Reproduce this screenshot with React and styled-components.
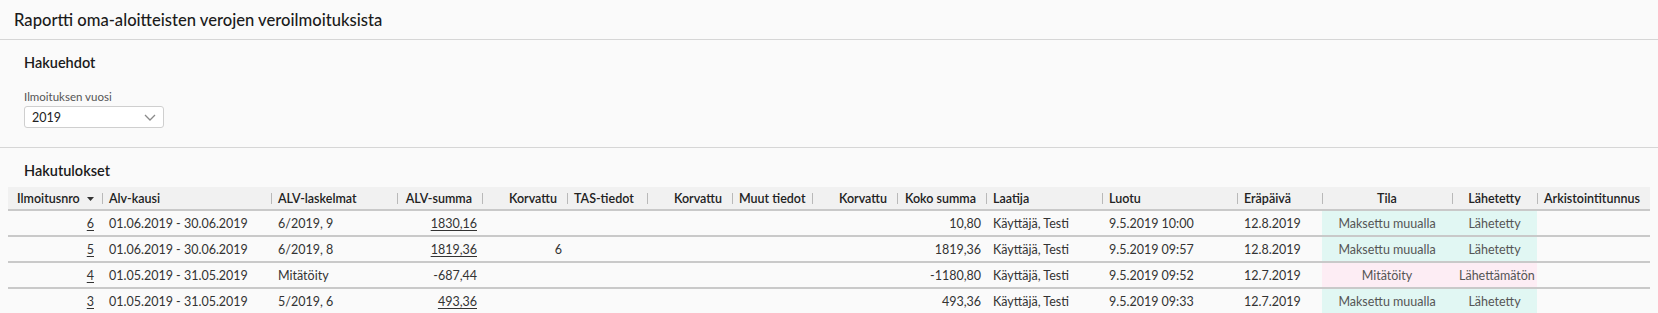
import React from 'react'
import styled, { createGlobalStyle } from 'styled-components'

const GlobalStyle = createGlobalStyle`
  html, body {
    margin: 0;
    padding: 0;
    background: #fafafa;
  }
  body {
    font-family: Lato, "Noto Sans", sans-serif;
    color: #333;
  }
`

const Page = styled.div`
  width: 1658px;
  display: flex;
  flex-direction: column;
`

const TitleBar = styled.header`
  height: 39px;
  display: flex;
  align-items: center;
  padding-left: 14px;
  border-bottom: 1px solid #d6d6d6;
`

const Title = styled.h1`
  margin: 0;
  font-size: 16.6px;
  font-weight: 500;
  color: #1b1b1b;
`

const Section = styled.section`
  display: flex;
  flex-direction: column;
  padding: ${p => p.$pad || '13px 24px 19px'};
  border-bottom: ${p => (p.$divider ? '1px solid #d6d6d6' : 'none')};
`

const SectionTitle = styled.h2`
  margin: 0;
  height: 20px;
  line-height: 20px;
  font-size: 14.5px;
  font-weight: 600;
  color: #1b1b1b;
  padding-left: ${p => p.$indent || '0'};
`

const Field = styled.div`
  display: flex;
  flex-direction: column;
  gap: 2px;
  margin-top: 17px;
`

const Label = styled.label`
  font-size: 11.5px;
  line-height: 14px;
  color: #555;
`

const SelectBox = styled.div`
  box-sizing: content-box;
  width: 124px;
  height: 20px;
  padding: 0 7px 0 7px;
  border: 1px solid #cfcfcf;
  border-radius: 3px;
  background: #fff;
  display: flex;
  align-items: center;
  justify-content: space-between;
  font-size: 12.5px;
  color: #222;
`

const Table = styled.table`
  margin-top: 6px;
  width: 1642px;
  table-layout: fixed;
  border-collapse: collapse;
  font-size: 12.5px;
`

const HeadCell = styled.th`
  position: relative;
  height: 22px;
  padding: 0 ${p => (p.$align === 'right' ? '10px' : '7px')} 0 ${p => p.$padLeft || '7px'};
  background: #f1f1f1;
  border-bottom: 2px solid #c9c9c9;
  text-align: ${p => p.$align || 'left'};
  font-weight: 600;
  color: #222;
  white-space: nowrap;

  &::before {
    content: '';
    display: ${p => (p.$first ? 'none' : 'block')};
    position: absolute;
    left: 0;
    top: 6px;
    bottom: 5px;
    border-left: 1px solid #b9b9b9;
  }
`

const SortIcon = styled.svg`
  margin-left: 7px;
  vertical-align: middle;
`

const Row = styled.tr`
  border-bottom: 2px solid #c9c9c9;
`

const Cell = styled.td`
  height: 24px;
  padding: 0 ${p => (p.$align === 'right' ? p.$padRight || '5px' : '7px')} 0 7px;
  text-align: ${p => p.$align || 'left'};
  white-space: nowrap;
  overflow: hidden;
  color: ${p => (p.$tone ? '#555' : '#333')};
  background: ${p =>
    p.$tone === 'ok' ? '#e1f7f3' : p.$tone === 'bad' ? '#fdedf4' : 'transparent'};
`

const Link = styled.a`
  color: inherit;
  text-decoration: underline;
  text-underline-offset: 2px;
`

const columns = [
  { title: 'Ilmoitusnro', width: 94, align: 'right', headAlign: 'left', sort: true },
  { title: 'Alv-kausi', width: 169 },
  { title: 'ALV-laskelmat', width: 126 },
  { title: 'ALV-summa', width: 85, align: 'right' },
  { title: 'Korvattu', width: 85, align: 'right' },
  { title: 'TAS-tiedot', width: 80 },
  { title: 'Korvattu', width: 85, align: 'right' },
  { title: 'Muut tiedot', width: 80 },
  { title: 'Korvattu', width: 85, align: 'right' },
  { title: 'Koko summa', width: 89, align: 'right' },
  { title: 'Laatija', width: 116 },
  { title: 'Luotu', width: 135 },
  { title: 'Eräpäivä', width: 85 },
  { title: 'Tila', width: 130, align: 'center' },
  { title: 'Lähetetty', width: 85, align: 'center' },
  { title: 'Arkistointitunnus', width: 113 },
]

const rows = [
  {
    nro: '6', kausi: '01.06.2019 - 30.06.2019', laskelmat: '6/2019, 9', summa: '1830,16',
    summaLink: true, korvattu: '', koko: '10,80', luotu: '9.5.2019 10:00', era: '12.8.2019',
    tila: 'Maksettu muualla', lahetetty: 'Lähetetty', tone: 'ok',
  },
  {
    nro: '5', kausi: '01.06.2019 - 30.06.2019', laskelmat: '6/2019, 8', summa: '1819,36',
    summaLink: true, korvattu: '6', koko: '1819,36', luotu: '9.5.2019 09:57', era: '12.8.2019',
    tila: 'Maksettu muualla', lahetetty: 'Lähetetty', tone: 'ok',
  },
  {
    nro: '4', kausi: '01.05.2019 - 31.05.2019', laskelmat: 'Mitätöity', summa: '-687,44',
    summaLink: false, korvattu: '', koko: '-1180,80', luotu: '9.5.2019 09:52', era: '12.7.2019',
    tila: 'Mitätöity', lahetetty: 'Lähettämätön', tone: 'bad',
  },
  {
    nro: '3', kausi: '01.05.2019 - 31.05.2019', laskelmat: '5/2019, 6', summa: '493,36',
    summaLink: true, korvattu: '', koko: '493,36', luotu: '9.5.2019 09:33', era: '12.7.2019',
    tila: 'Maksettu muualla', lahetetty: 'Lähetetty', tone: 'ok',
  },
]

const Chevron = () => (
  <svg width="12" height="7" viewBox="0 0 12 7">
    <path d="M1 1 L6 6 L11 1" fill="none" stroke="#8a8a8a" strokeWidth="1.3" />
  </svg>
)

const App = () => {
  return (
    <Page>
      <GlobalStyle />
      <TitleBar>
        <Title>Raportti oma-aloitteisten verojen veroilmoituksista</Title>
      </TitleBar>

      <Section $divider>
        <SectionTitle>Hakuehdot</SectionTitle>
        <Field>
          <Label>Ilmoituksen vuosi</Label>
          <SelectBox>
            <span>2019</span>
            <Chevron />
          </SelectBox>
        </Field>
      </Section>

      <Section $pad="13px 8px 0">
        <SectionTitle $indent="16px">Hakutulokset</SectionTitle>
        <Table>
          <colgroup>
            {columns.map((c, i) => (
              <col key={i} style={{ width: c.width }} />
            ))}
          </colgroup>
          <thead>
            <tr>
              {columns.map((c, i) => (
                <HeadCell
                  key={i}
                  $first={i === 0}
                  $align={c.headAlign || c.align}
                  $padLeft={i === 0 ? '9px' : undefined}
                >
                  {c.title}
                  {c.sort && (
                    <SortIcon width="7" height="4" viewBox="0 0 7 4">
                      <path d="M0 0 H7 L3.5 4 Z" fill="#333" />
                    </SortIcon>
                  )}
                </HeadCell>
              ))}
            </tr>
          </thead>
          <tbody>
            {rows.map(r => (
              <Row key={r.nro}>
                <Cell $align="right" $padRight="8px">
                  <Link>{r.nro}</Link>
                </Cell>
                <Cell>{r.kausi}</Cell>
                <Cell>{r.laskelmat}</Cell>
                <Cell $align="right">{r.summaLink ? <Link>{r.summa}</Link> : r.summa}</Cell>
                <Cell $align="right">{r.korvattu}</Cell>
                <Cell />
                <Cell $align="right" />
                <Cell />
                <Cell $align="right" />
                <Cell $align="right">{r.koko}</Cell>
                <Cell>Käyttäjä, Testi</Cell>
                <Cell>{r.luotu}</Cell>
                <Cell>{r.era}</Cell>
                <Cell $align="center" $tone={r.tone}>{r.tila}</Cell>
                <Cell $align="center" $tone={r.tone}>{r.lahetetty}</Cell>
                <Cell />
              </Row>
            ))}
          </tbody>
        </Table>
      </Section>
    </Page>
  )
}

export default App
